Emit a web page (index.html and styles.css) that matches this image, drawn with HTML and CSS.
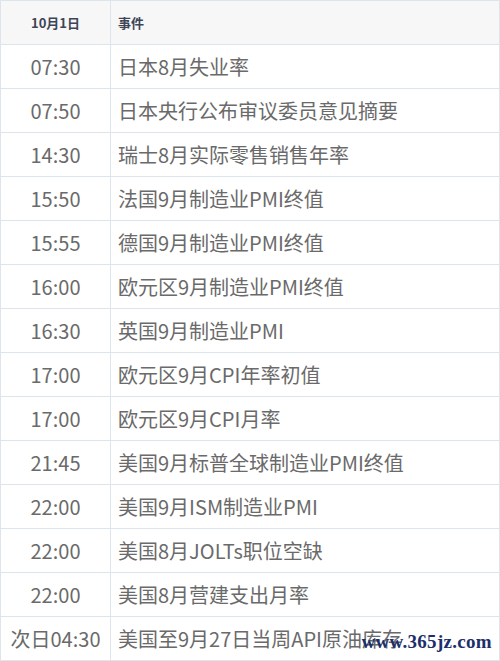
FILE: index.html
```html
<!DOCTYPE html>
<html lang="zh">
<head>
<meta charset="utf-8">
<link rel="stylesheet" href="styles.css">
</head>
<body>
<div class="wrap">
<table class="cal">
  <thead>
    <tr><th class="c-time">10月1日</th><th class="c-event">事件</th></tr>
  </thead>
  <tbody>
    <tr><td class="c-time">07:30</td><td class="c-event">日本8月失业率</td></tr>
    <tr><td class="c-time">07:50</td><td class="c-event">日本央行公布审议委员意见摘要</td></tr>
    <tr><td class="c-time">14:30</td><td class="c-event">瑞士8月实际零售销售年率</td></tr>
    <tr><td class="c-time">15:50</td><td class="c-event">法国9月制造业PMI终值</td></tr>
    <tr><td class="c-time">15:55</td><td class="c-event">德国9月制造业PMI终值</td></tr>
    <tr><td class="c-time">16:00</td><td class="c-event">欧元区9月制造业PMI终值</td></tr>
    <tr><td class="c-time">16:30</td><td class="c-event">英国9月制造业PMI</td></tr>
    <tr><td class="c-time">17:00</td><td class="c-event">欧元区9月CPI年率初值</td></tr>
    <tr><td class="c-time">17:00</td><td class="c-event">欧元区9月CPI月率</td></tr>
    <tr><td class="c-time">21:45</td><td class="c-event">美国9月标普全球制造业PMI终值</td></tr>
    <tr><td class="c-time">22:00</td><td class="c-event">美国9月ISM制造业PMI</td></tr>
    <tr><td class="c-time">22:00</td><td class="c-event">美国8月JOLTs职位空缺</td></tr>
    <tr><td class="c-time">22:00</td><td class="c-event">美国8月营建支出月率</td></tr>
    <tr><td class="c-time">次日04:30</td><td class="c-event">美国至9月27日当周API原油库存</td></tr>
  </tbody>
</table>
<div class="watermark">www.365jz.com</div>
</div>
</body>
</html>
```

FILE: styles.css
```css
html, body {
  margin: 0;
  padding: 0;
  background: #ffffff;
}

.wrap {
  position: relative;
  width: 500px;
}

.cal {
  width: 500px;
  border-collapse: collapse;
  table-layout: fixed;
  font-family: "Noto Sans CJK SC", "Noto Sans", sans-serif;
}

.cal th,
.cal td {
  border: 1px solid #dde4ec;
  height: 44px;
  padding: 0;
  box-sizing: border-box;
  vertical-align: middle;
}

.cal th {
  background: #f7f7f7;
  font-size: 13px;
  font-weight: 700;
  color: #3e4556;
}

.cal td {
  font-size: 20px;
  font-weight: 400;
  color: #6a6a6a;
}

.cal .c-time {
  width: 110px;
  text-align: center;
}

.cal .c-event {
  text-align: left;
  padding-left: 7px;
}

.watermark {
  position: absolute;
  right: 8px;
  bottom: 8px;
  font-family: "Liberation Serif", "DejaVu Serif", serif;
  font-size: 19px;
  font-weight: 700;
  color: #1c2f6b;
  letter-spacing: 0.3px;
}
```
